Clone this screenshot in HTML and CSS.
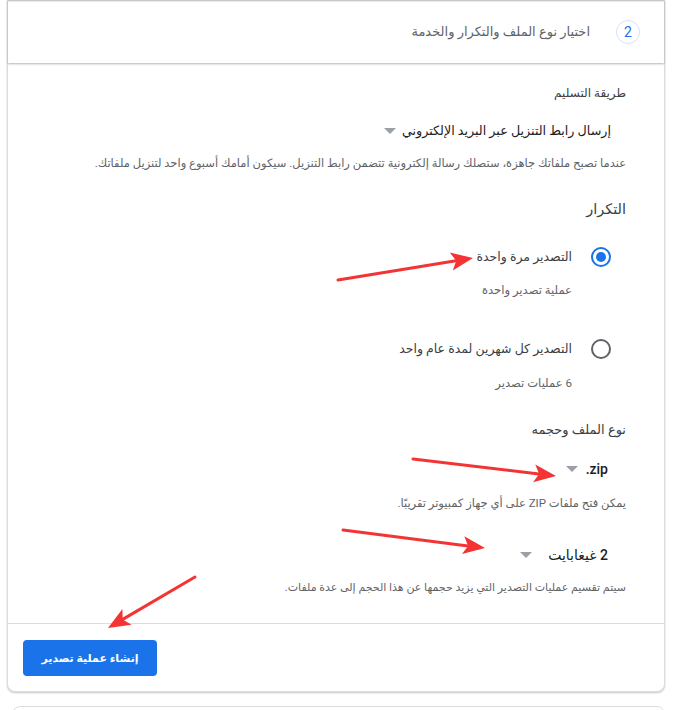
FILE: index.html
```html
<!DOCTYPE html>
<html lang="ar" dir="rtl">
<head>
  <meta charset="UTF-8">
  <title>Google Takeout</title>
  <link rel="stylesheet" href="styles.css">
</head>
<body>
  <div class="page">
    <div class="card">
      <div class="card-head">
        <span class="step">2</span>
        <span class="step-title">اختيار نوع الملف والتكرار والخدمة</span>
      </div>

      <div class="card-body">
        <div class="heading first">طريقة التسليم</div>
        <div class="select s-delivery">
          <span>إرسال رابط التنزيل عبر البريد الإلكتروني</span>
          <span class="caret"></span>
        </div>
        <div class="hint h-delivery">عندما تصبح ملفاتك جاهزة، ستصلك رسالة إلكترونية تتضمن رابط التنزيل. سيكون أمامك أسبوع واحد لتنزيل ملفاتك.</div>

        <div class="heading h-freq">التكرار</div>
        <div class="radio-row r-once">
          <span class="radio checked"></span>
          <span class="radio-label">التصدير مرة واحدة</span>
        </div>
        <div class="radio-sub s-once">عملية تصدير واحدة</div>
        <div class="radio-row r-multi">
          <span class="radio"></span>
          <span class="radio-label">التصدير كل شهرين لمدة عام واحد</span>
        </div>
        <div class="radio-sub s-multi">6 عمليات تصدير</div>

        <div class="heading h-type">نوع الملف وحجمه</div>
        <div class="select s-zip">
          <span class="value ltr">.zip</span>
          <span class="caret"></span>
        </div>
        <div class="hint h-zip">يمكن فتح ملفات ZIP على أي جهاز كمبيوتر تقريبًا.</div>
        <div class="select s-size">
          <span class="value">2 غيغابايت</span>
          <span class="caret wide"></span>
        </div>
        <div class="hint h-size">سيتم تقسيم عمليات التصدير التي يزيد حجمها عن هذا الحجم إلى عدة ملفات.</div>
      </div>

      <div class="card-foot">
        <button class="btn-primary">إنشاء عملية تصدير</button>
      </div>
    </div>

    <div class="card next"></div>
  </div>

  <svg class="arrows" width="692" height="710" viewBox="0 0 692 710">
    <g stroke="#f43434" stroke-width="3" stroke-linecap="round" fill="none">
      <line x1="338" y1="280" x2="456" y2="260.7"/>
      <line x1="413" y1="459" x2="539" y2="474"/>
      <line x1="343" y1="530" x2="468" y2="545.9"/>
      <line x1="195" y1="577" x2="122.7" y2="619.4"/>
    </g>
    <g fill="#f43434">
      <polygon points="473,258 452.8,270.4 456.2,260.7 449.8,252.6"/>
      <polygon points="556,476 533.1,482.3 539.1,474 535.3,464.5"/>
      <polygon points="485,548 462,554.1 468.1,545.9 464.3,536.3"/>
      <polygon points="108,628 131.6,624.7 122.7,619.4 122.4,609.1"/>
    </g>
  </svg>
</body>
</html>
```

FILE: styles.css
```css
html {
  overflow: hidden;
}
body {
  margin: 0;
  background: #fff;
  font-family: Roboto, "DejaVu Sans", sans-serif;
  color: #202124;
  position: relative;
}
.page {
  direction: ltr;
  padding-left: 7px;
}
.card {
  direction: rtl;
  width: 656px;
  background: #fff;
  border: 1px solid #dadce0;
  border-top: none;
  border-radius: 0 0 8px 8px;
  box-shadow: 0 1px 2px rgba(60, 64, 67, 0.3);
}
.card-head {
  height: 63px;
  display: flex;
  align-items: center;
  padding-right: 24px;
  box-shadow: 0 1px 2px rgba(0, 0, 0, 0.3), inset 0 3px 2px -2px rgba(0, 0, 0, 0.3);
}
.step {
  width: 22px;
  height: 22px;
  border: 1px solid #d2e3fc;
  border-radius: 50%;
  color: #1a73e8;
  font-size: 14px;
  display: flex;
  align-items: center;
  justify-content: center;
}
.step-title {
  margin-right: 26px;
  font-size: 13px;
  color: #5f6368;
}
.card-body {
  padding: 20px 38px 25px 16px;
  border-bottom: 1px solid #dadce0;
}
.heading,
.select,
.hint,
.radio-row,
.radio-sub {
  line-height: 20px;
}
.heading {
  font-size: 13px;
  color: #3c4043;
}
.heading.first { font-size: 12px; }
.h-freq { margin-top: 27px; font-size: 14.5px; }
.h-type { margin-top: 27px; }
.select {
  display: flex;
  align-items: center;
  padding-right: 15px;
  font-size: 12.7px;
  color: #202124;
}
.s-delivery { margin-top: 18px; }
.s-zip { margin-top: 19px; padding-right: 18px; }
.s-size { margin-top: 32px; padding-right: 18px; }
.value {
  font-size: 14px;
  font-weight: 500;
  color: #202124;
}
.ltr {
  direction: ltr;
  unicode-bidi: isolate;
}
.caret {
  width: 0;
  height: 0;
  margin-right: 6px;
  border-left: 6px solid transparent;
  border-right: 6px solid transparent;
  border-top: 6px solid #9aa0a6;
}
.s-zip .caret { margin-right: 8px; }
.caret.wide { margin-right: 16px; }
.hint {
  font-size: 11.5px;
  color: #5f6368;
}
.h-delivery { margin-top: 12px; }
.h-zip { margin-top: 14px; }
.h-size { margin-top: 13px; font-size: 11px; }
.radio-row {
  display: flex;
  align-items: center;
  padding-right: 15px;
  font-size: 12.5px;
}
.r-once { margin-top: 27px; }
.r-multi { margin-top: 39px; }
.radio {
  width: 16px;
  height: 16px;
  border: 2px solid #5f6368;
  border-radius: 50%;
  display: flex;
  align-items: center;
  justify-content: center;
  box-sizing: content-box;
}
.radio.checked {
  border-color: #1a73e8;
}
.radio.checked::after {
  content: "";
  width: 10px;
  height: 10px;
  border-radius: 50%;
  background: #1a73e8;
}
.radio-label {
  margin-right: 19px;
  color: #3c4043;
}
.radio-sub {
  padding-right: 54px;
  font-size: 11.6px;
  color: #5f6368;
}
.s-once { margin-top: 13px; }
.s-multi { margin-top: 14px; }
.card-foot {
  display: flex;
  justify-content: flex-end;
  padding: 16px 15px 15px;
}
.btn-primary {
  width: 134px;
  height: 36px;
  border: none;
  border-radius: 4px;
  background: #1a73e8;
  color: #fff;
  font-family: inherit;
  font-size: 11px;
  font-weight: bold;
}
.card.next {
  margin-top: 14px;
  margin-left: 5px;
  width: 651px;
  height: 20px;
  border-top: 1px solid #dadce0;
  border-radius: 8px 8px 0 0;
  box-shadow: none;
}
.arrows {
  position: absolute;
  top: 0;
  left: 0;
  pointer-events: none;
}
```
